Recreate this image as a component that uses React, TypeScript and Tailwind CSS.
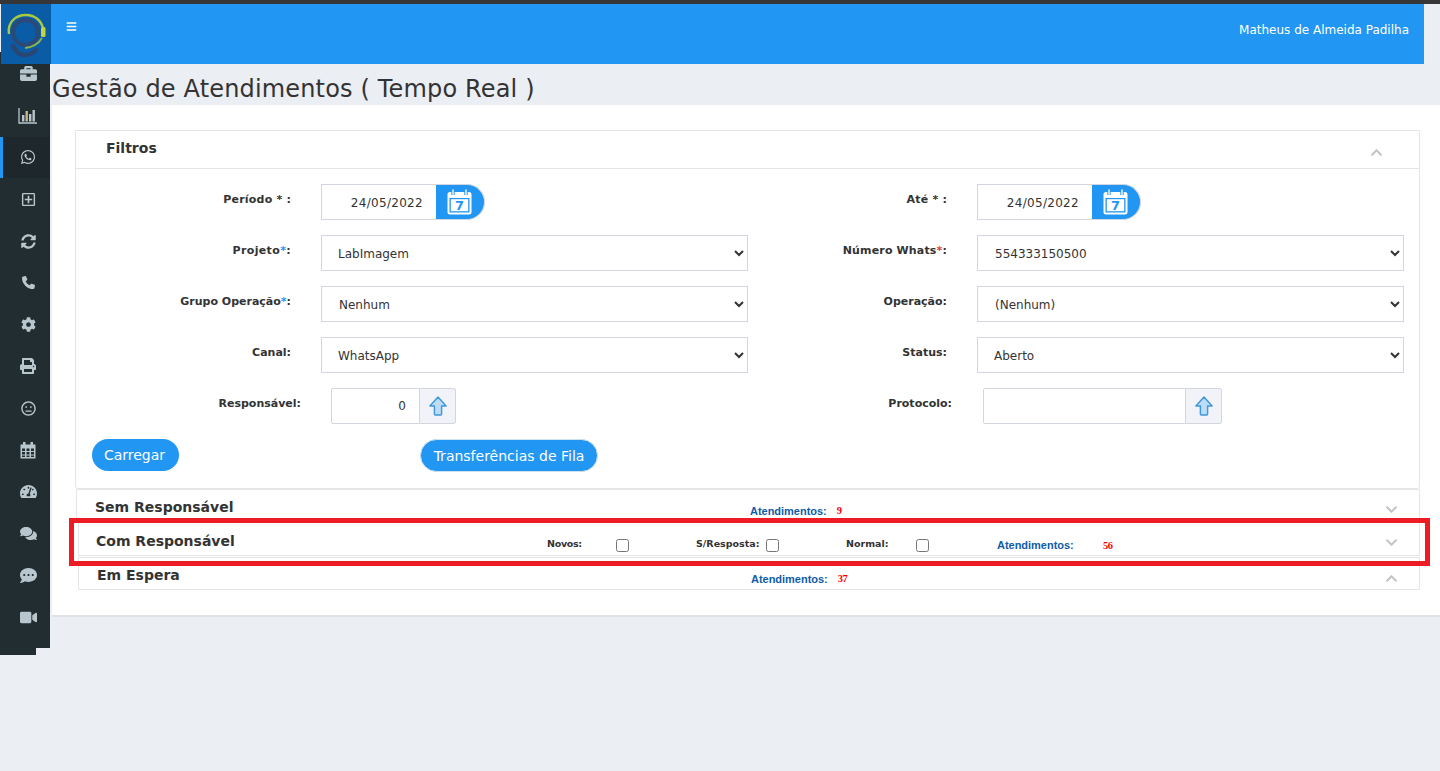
import React from "react";
import { FaBriefcase, FaWhatsapp, FaRegPlusSquare, FaSyncAlt, FaCog, FaPrint, FaRegMeh, FaTachometerAlt, FaComments, FaCommentDots, FaVideo, FaBars, FaChevronUp, FaChevronDown } from "react-icons/fa";
import { FaPhone } from "react-icons/fa6";

function Logo() {
  return (
    <svg width="50" height="60" viewBox="0 0 50 60" className="block">
      <rect width="50" height="60" fill="#0b5ca6" />
      <circle cx="24.500" cy="28.500" r="12.500" fill="none" stroke="#2b4a78" strokeWidth="4" />
      <path d="M12 42c3 6 7 9 12 9 5 0 8-2 11-5" fill="none" stroke="#2a4672" strokeWidth="4.500" strokeLinecap="round" />
      <path d="M8 30C6 18 15 11 25 11c9 0 16 6 17 14" fill="none" stroke="#a9c93f" strokeWidth="2.400" />
      <path d="M41 34c-3 5-9 9-17 10" fill="none" stroke="#8fb04a" strokeWidth="2" />
      <rect x="40" y="23" width="4.500" height="10" rx="1.500" fill="#c4d53a" />
    </svg>
  );
}

function ChartIcon() {
  return (
    <svg width="20" height="17" viewBox="0 0 20 17">
      <path d="M1 1v15h18" fill="none" stroke="#b8c7ce" strokeWidth="1.3" />
      <rect x="4" y="8" width="2.4" height="6.5" fill="#b8c7ce" />
      <rect x="7.5" y="4" width="2.4" height="10.5" fill="#c9b48a" />
      <rect x="11" y="7" width="2.4" height="7.5" fill="#b8c7ce" />
      <rect x="14.5" y="3" width="2.4" height="11.5" fill="#b8c7ce" />
    </svg>
  );
}

function CalendarIcon() {
  return (
    <svg width="25" height="26" viewBox="0 0 25 26">
      <path d="M3 3h19a2.5 2.5 0 0 1 2.5 2.5V23a2.5 2.5 0 0 1-2.5 2.5H3A2.5 2.5 0 0 1 .5 23V5.5A2.5 2.5 0 0 1 3 3z" fill="#fff" />
      <rect x="2.5" y="9" width="20" height="14.5" fill="#2196f3" />
      <rect x="3.8" y="10.2" width="17.4" height="12" fill="#fff" />
      <path d="M6 1v5M19 1v5" stroke="#2196f3" strokeWidth="3.4" />
      <path d="M6 1v4.5M19 1v4.5" stroke="#fff" strokeWidth="1.4" strokeLinecap="round" />
      <text x="12.5" y="21" textAnchor="middle" fontFamily="'DejaVu Sans', sans-serif" fontWeight="700" fontSize="13" fill="#2196f3">7</text>
    </svg>
  );
}

function ArrowUp() {
  return (
    <svg width="18" height="20" viewBox="0 0 20 22">
      <path d="M10 1 19 11h-5v9a1 1 0 0 1-1 1H7a1 1 0 0 1-1-1v-9H1z" fill="#bcdcf7" stroke="#3f97dc" strokeWidth="1.6" strokeLinejoin="round" />
    </svg>
  );
}

function CalendarGlyph() {
  return (
    <svg width="16" height="17" viewBox="0 0 16 17">
      <path d="M3 0h2.5v3H3zM10.5 0H13v3h-2.5z" fill="#b8c7ce" />
      <path d="M.5 2.5h15v14H.5z" fill="#b8c7ce" />
      <path d="M2 6.5h3v2.5H2zM6.500 6.500h3v2.500h-3zM11 6.500h3v2.500h-3zM2 10h3v2.500H2zM6.500 10h3v2.500h-3zM11 10h3v2.500h-3zM2 13.500h3V15H2zM6.500 13.500h3V15h-3zM11 13.500h3V15h-3z" fill="#222d32" />
    </svg>
  );
}

const sideItems: { icon: React.ReactNode; active?: boolean }[] = [
  { icon: <FaBriefcase size={17} /> },
  { icon: <ChartIcon /> },
  { icon: <FaWhatsapp size={16} />, active: true },
  { icon: <FaRegPlusSquare size={15} /> },
  { icon: <FaSyncAlt size={15} /> },
  { icon: <FaPhone size={13} /> },
  { icon: <FaCog size={15} /> },
  { icon: <FaPrint size={16} /> },
  { icon: <FaRegMeh size={15} /> },
  { icon: <CalendarGlyph /> },
  { icon: <FaTachometerAlt size={17} /> },
  { icon: <FaComments size={17} /> },
  { icon: <FaCommentDots size={17} /> },
  { icon: <FaVideo size={17} /> },
];

function Sidebar() {
  return (
    <aside className="w-[50px] shrink-0 flex flex-col">
      <div className="w-[50px] h-[60px] ml-px relative z-10"><Logo /></div>
      <div className="bg-[#222d32] h-[596px] -mt-[12px] pt-px flex flex-col text-[#b8c7ce]">
        {sideItems.map((it, i) => (
          <div
            key={i}
            className={
              "h-[41.800px] shrink-0 flex items-center justify-center border-l-[3px] pl-[3px] " +
              (it.active ? "border-[#2196f3] bg-[#1e282c]" : "border-transparent")
            }
          >
            {it.icon}
          </div>
        ))}
      </div>
      <div className="bg-[#222d32] w-[36px] h-[7px]" />
    </aside>
  );
}

function Label({ children, w, track = "tracking-normal" }: { children: React.ReactNode; w: string; track?: string }) {
  return <div className={w + " shrink-0 text-right text-[11px] font-bold text-[#333] -mt-[4px] " + track}>{children}</div>;
}

function DateField({ value }: { value: string }) {
  return (
    <div className="flex h-[36px] w-[164px]">
      <div className="w-[115px] border border-[#d2d6de] border-r-0 flex items-center justify-end pr-[13px] pt-px text-[12px] tracking-[0.3px] text-[#333]">{value}</div>
      <div className="w-[49px] bg-[#2196f3] rounded-r-[18px] border border-[#d2d6de] border-l-0 flex items-center justify-center pr-[2px]">
        <CalendarIcon />
      </div>
    </div>
  );
}

function Sel({ value, pad = "pl-[12px]" }: { value: string; pad?: string }) {
  return (
    <select defaultValue={value} className={"h-[36px] w-[427px] border border-[#d2d6de] bg-white pt-[2px] text-[12px] text-[#333] outline-none " + pad}>
      <option>{value}</option>
    </select>
  );
}

function Lookup({ value, w }: { value: string; w: string }) {
  return (
    <div className="flex h-[36px]">
      <div className={w + " border border-[#d2d6de] flex items-center justify-end pr-[13px] text-[12px] text-[#333] rounded-l-[2px]"}>{value}</div>
      <div className="w-[36px] bg-[#f1f3f8] border border-[#d2d6de] border-l-0 rounded-r-[3px] flex items-center justify-center">
        <ArrowUp />
      </div>
    </div>
  );
}

function FormRow({ children }: { children: React.ReactNode }) {
  return <div className="flex items-center h-[36px] mb-[15px]">{children}</div>;
}

function Chev({ up }: { up?: boolean }) {
  const C = up ? FaChevronUp : FaChevronDown;
  return <C size={13} className="text-[#c4c4c4]" />;
}

function Count({ children }: { children: React.ReactNode }) {
  return <span className="text-[10.500px] font-bold tracking-[-0.4px] text-[#ff0000] font-['Liberation_Serif',serif]">{children}</span>;
}

function Atend() {
  return <span className="text-[11px] text-[#0e5da8] font-['Liberation_Sans',sans-serif] font-bold tracking-[-0.02px] whitespace-nowrap">Atendimentos:</span>;
}

export default function App() {
  return (
    <div className="relative min-h-[771px] bg-[#ebeef3] font-['DejaVu_Sans',sans-serif] overflow-hidden">
      <div className="h-[4px] bg-[#363636]" />
      <div className="flex">
        <Sidebar />
        <main className="flex-1 min-w-0">
          <header className="h-[60px] mr-[16px] ml-px bg-[#2196f3] flex justify-between text-white">
            <FaBars size={11} className="ml-[15px] mt-[17px]" />
            <span className="text-[12px] font-normal mt-[17px] mr-[15px]">Matheus de Almeida Padilha</span>
          </header>
          <h1 className="h-[41px] ml-[2px] pt-[9px] text-[24px] leading-[33px] tracking-[0.16px] text-[#333] font-normal">Gestão de Atendimentos ( Tempo Real )</h1>
          <section className="ml-[2px] h-[512px] bg-white border-b-2 border-[#dfe2e7] pl-[23px] pt-[25px]">
            <div className="w-[1345px] h-[359px] border border-[#e5e5e5] rounded-b-[3px]">
              <div className="h-[38px] border-b border-[#e5e5e5] flex items-center justify-between pl-[30px] pr-[36px]">
                <span className="text-[14px] font-bold text-[#333] -mt-[3px]">Filtros</span>
                <span className="mt-[6px]"><Chev up /></span>
              </div>
              <div className="pt-[15px]">
                <FormRow>
                  <Label track="tracking-[0.2px]" w="w-[215px]">Período * :</Label>
                  <div className="ml-[30px] w-[427px]"><DateField value="24/05/2022" /></div>
                  <Label track="tracking-[0.2px]" w="w-[199px]">Até * :</Label>
                  <div className="ml-[30px]"><DateField value="24/05/2022" /></div>
                </FormRow>
                <FormRow>
                  <Label track="tracking-[0.35px]" w="w-[215px]">Projeto<span className="text-[#2196f3]">*</span>:</Label>
                  <div className="ml-[30px]"><Sel value="LabImagem" /></div>
                  <Label track="tracking-[0.15px]" w="w-[199px]">Número Whats<span className="text-[#e53935]">*</span>:</Label>
                  <div className="ml-[30px]"><Sel value="554333150500" pad="pl-[13px]" /></div>
                </FormRow>
                <FormRow>
                  <Label w="w-[215px]">Grupo Operação<span className="text-[#2196f3]">*</span>:</Label>
                  <div className="ml-[30px]"><Sel value="Nenhum" pad="pl-[13px]" /></div>
                  <Label w="w-[199px]">Operação:</Label>
                  <div className="ml-[30px]"><Sel value="(Nenhum)" pad="pl-[13px]" /></div>
                </FormRow>
                <FormRow>
                  <Label w="w-[215px]">Canal:</Label>
                  <div className="ml-[30px]"><Sel value="WhatsApp" /></div>
                  <Label w="w-[199px]">Status:</Label>
                  <div className="ml-[30px]"><Sel value="Aberto" /></div>
                </FormRow>
                <FormRow>
                  <Label w="w-[225px]">Responsável:</Label>
                  <div className="ml-[30px] w-[417px]"><Lookup value="0" w="w-[89px]" /></div>
                  <Label w="w-[204px]">Protocolo:</Label>
                  <div className="ml-[31px]"><Lookup value="" w="w-[203px]" /></div>
                </FormRow>
                <div className="flex items-start pl-[16px]">
                  <button className="h-[32px] w-[87px] rounded-[16px] bg-[#2196f3] text-white text-[14px] pr-[2px]">Carregar</button>
                  <button className="ml-[241px] h-[33px] w-[178px] rounded-[17px] bg-[#2196f3] border border-[#cfe0ee] text-white text-[14px] pt-[1px]">Transferências de Fila</button>
                </div>
              </div>
            </div>

            <div className="ml-[1px] w-[1344px] h-[33px] border border-[#e5e5e5] border-b-0 flex relative">
              <span className="ml-[18px] mt-[10px] text-[14px] font-bold text-[#333] leading-none">Sem Responsável</span>
              <div className="absolute left-[673px] top-[16px] flex items-center gap-[10px] leading-none"><Atend /><Count>9</Count></div>
              <span className="absolute right-[21px] top-[13px]"><Chev /></span>
            </div>

            <div className="ml-[3px] w-[1342px] h-[34px] border border-[#e5e5e5] relative">
              <span className="absolute left-[17px] top-[11px] text-[14px] font-bold text-[#333] leading-none">Com Responsável</span>
              <label className="absolute left-[468px] top-[16px] text-[9.500px] tracking-[-0.3px] font-bold text-[#333] leading-none">Novos:</label>
              <input type="checkbox" className="absolute left-[537px] top-[16px]" />
              <label className="absolute left-[617px] top-[16px] text-[9.500px] font-bold text-[#333] leading-none">S/Resposta:</label>
              <input type="checkbox" className="absolute left-[687px] top-[16px]" />
              <label className="absolute left-[767px] top-[16px] text-[9.500px] font-bold text-[#333] leading-none">Normal:</label>
              <input type="checkbox" className="absolute left-[837px] top-[16px]" />
              <div className="absolute left-[918px] top-[13px] leading-none"><Atend /></div>
              <div className="absolute left-[1024px] top-[13px] leading-none"><Count>56</Count></div>
              <span className="absolute right-[21px] top-[13px]"><Chev /></span>
            </div>

            <div className="ml-[3px] mt-px w-[1342px] h-[33px] border border-[#e5e5e5] relative">
              <span className="absolute left-[18px] top-[10px] text-[14px] font-bold text-[#333] leading-none">Em Espera</span>
              <div className="absolute left-[672px] top-[16px] flex items-center gap-[10px] leading-none"><Atend /><Count>37</Count></div>
              <span className="absolute right-[21px] top-[14px]"><Chev up /></span>
            </div>
          </section>
        </main>
      </div>
      <div className="absolute left-[69px] top-[518px] w-[1361px] h-[48px] border-[5px] border-[#ed1c24] pointer-events-none" />
    </div>
  );
}
